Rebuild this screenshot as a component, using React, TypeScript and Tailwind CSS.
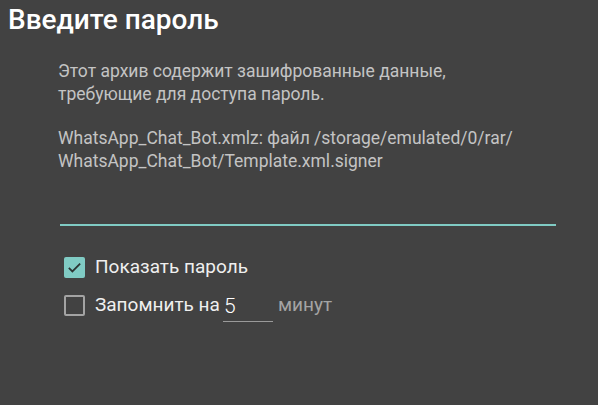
export default function App() {
  return (
    <div className="w-[598px] h-[405px] bg-[#424242] overflow-hidden" style={{ fontFamily: "Roboto, 'Noto Sans', sans-serif" }}>
      <h1 className="pl-[8px] pt-[3px] text-[28px] leading-[34px] font-medium text-white">Введите пароль</h1>

      <div className="pl-[58px] pr-[30px] mt-[23px] text-[17.5px] leading-[23px] text-[#c4c4c4]">
        <p>Этот архив содержит зашифрованные данные,<br />требующие для доступа пароль.</p>
        <p className="mt-[21px]">WhatsApp_Chat_Bot.xmlz: файл /storage/emulated/0/rar/<br />WhatsApp_Chat_Bot/Template.xml.signer</p>
      </div>

      <div className="ml-[60px] mr-[42px] mt-[51px] h-[2px] bg-[#80cbc4]" />

      <div className="pl-[64px] pt-[29px] flex flex-col gap-[14px]">
        <label className="h-[24px] flex items-center">
          <span className="w-[21px] h-[21px] rounded-[2px] bg-[#80cbc4] flex items-center justify-center">
            <svg width="17" height="17" viewBox="0 0 24 24" fill="none" stroke="#2b3433" strokeWidth="2.5">
              <path d="M4 12.5l5 5L20 6.5" />
            </svg>
          </span>
          <span className="ml-[10px] text-[19px] leading-[24px] text-[#efefef]">Показать пароль</span>
        </label>
        <label className="h-[24px] flex items-center">
          <span className="w-[21px] h-[21px] rounded-[2px] border-2 border-[#a3a3a3]" />
          <span className="ml-[10px] text-[19px] leading-[24px] text-[#efefef]">Запомнить на</span>
          <span className="ml-[3px] mt-[6px] w-[50px] h-[28px] border-b border-[#9a9a9a] text-[21px] leading-[24px] font-light text-white pl-[1px]">5</span>
          <span className="ml-[5px] text-[19px] leading-[24px] text-[#a4a4a4]">минут</span>
        </label>
      </div>
    </div>
  );
}
